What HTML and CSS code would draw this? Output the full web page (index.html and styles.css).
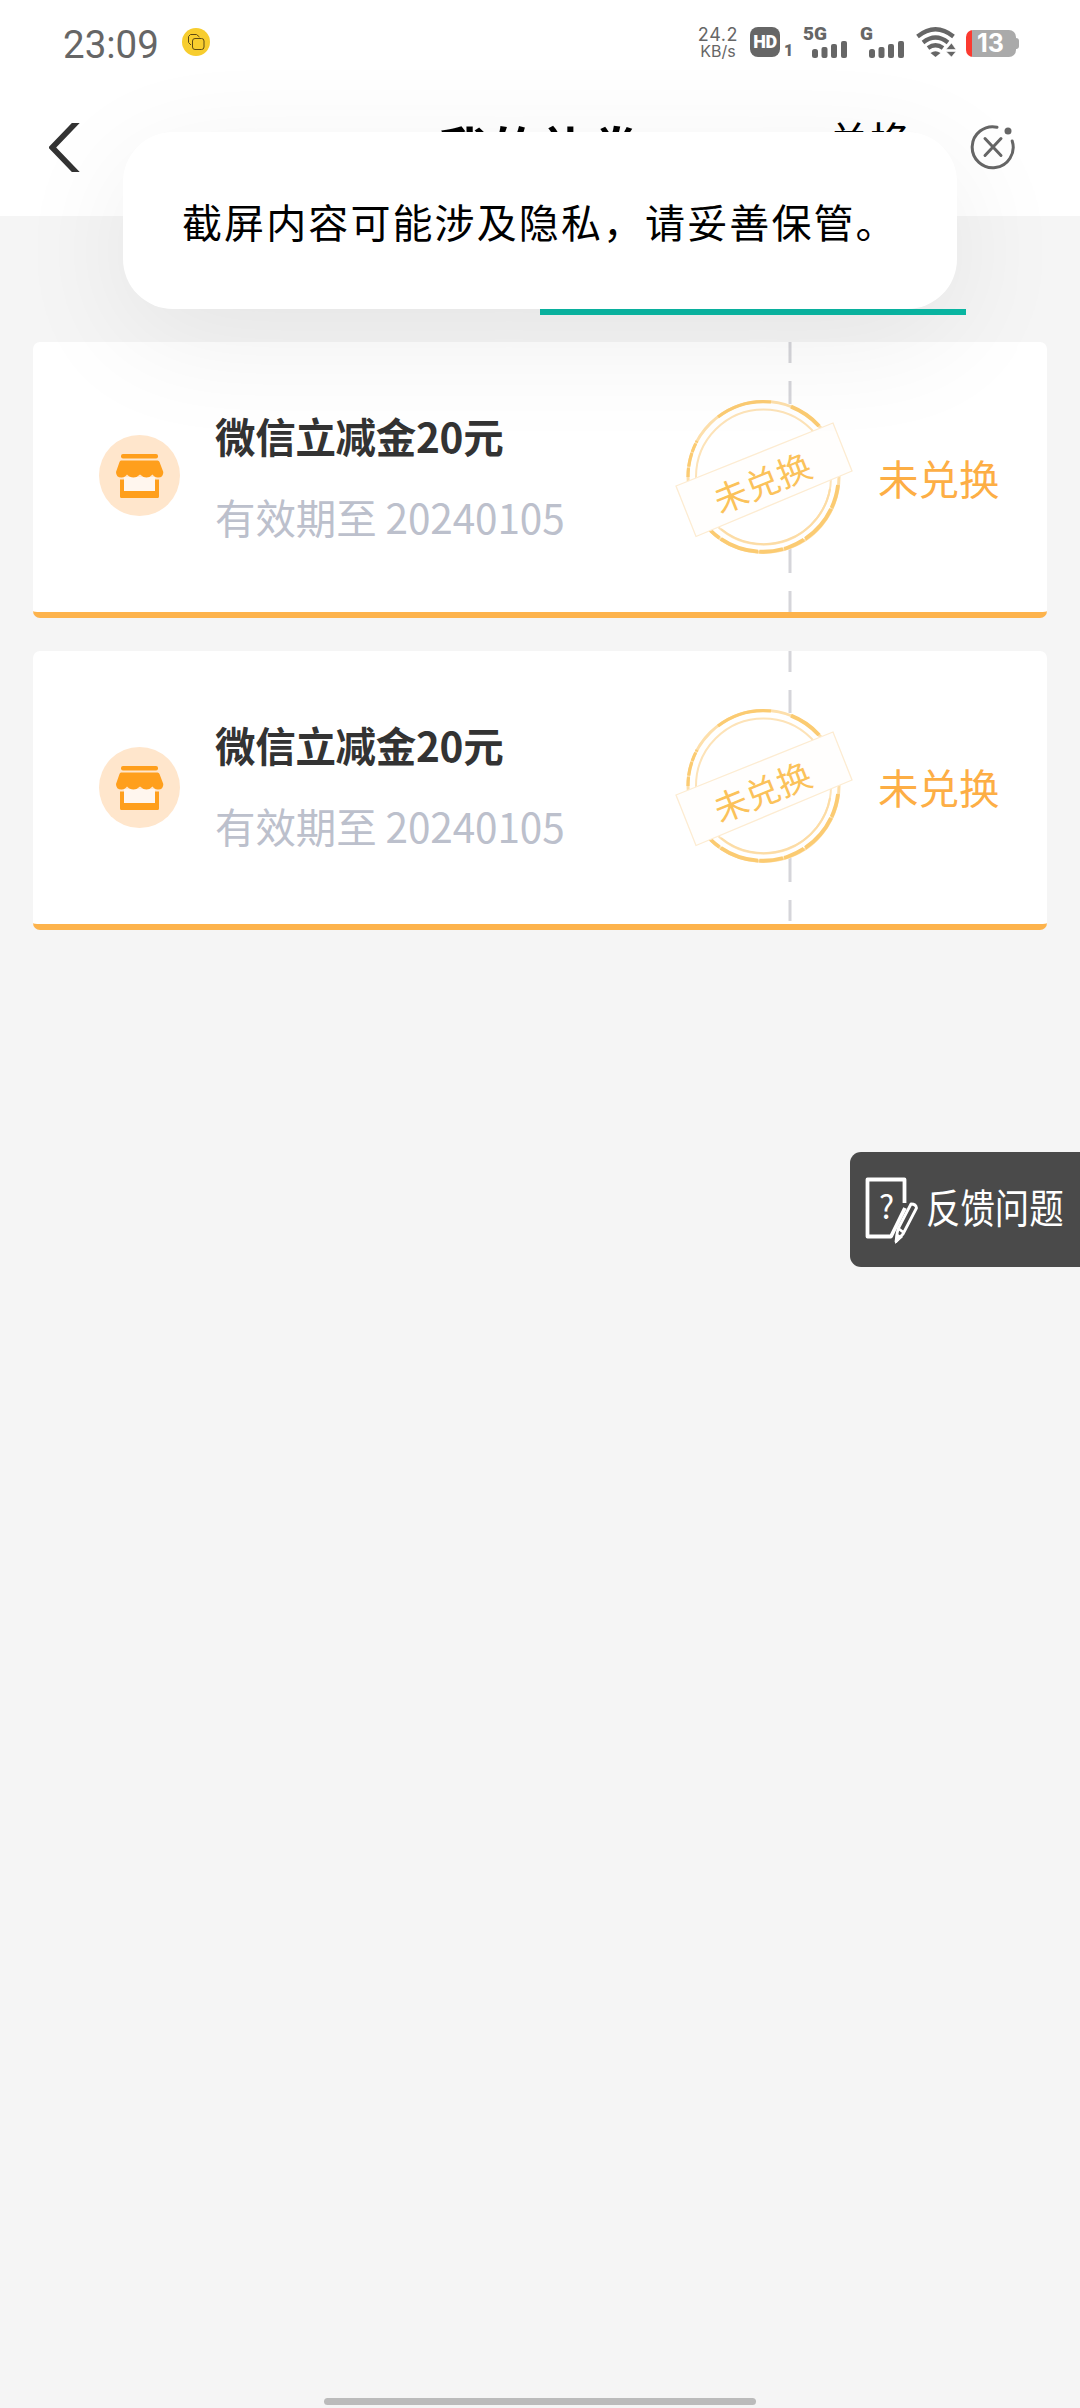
FILE: index.html
```html
<!DOCTYPE html>
<html lang="zh-CN">
<head>
<meta charset="utf-8">
<title>我的礼券</title>
<link rel="stylesheet" href="styles.css">
</head>
<body>
<svg width="0" height="0" class="defs" aria-hidden="true">
  <symbol id="shop" viewBox="0 0 81 81">
    <circle cx="40.5" cy="40.5" r="40.5" fill="#ffe6cc"/>
    <rect x="22" y="19" width="37" height="4.5" rx="2" fill="#ff9f1c"/>
    <path d="M25 42V56H56V42Z" fill="#fff6ee"/>
    <path d="M22 25.500H58.500Q60 25.500 60.500 27L64.300 37Q64.500 42.500 59 42.500Q55.500 42.500 53.500 39.500Q51 42.500 47.500 42.500Q44 42.500 41 39.500Q38 42.500 34.500 42.500Q30.500 42.500 28 39.500Q26 42.500 22.500 42.500Q17 42.500 17 37L20.500 27Q21 25.500 22 25.500Z" fill="#ff9f1c"/>
    <path d="M21 44.500H25V56H56V44.500H60V61.500Q60 63 58.500 63H22.500Q21 63 21 61.500Z" fill="#ff9f1c"/>
  </symbol>
  <symbol id="divider" viewBox="0 0 4 270">
    <path d="M2 0V21M2 39V62M2 206V231M2 249V270" stroke="#d5d5da" stroke-width="3"/>
  </symbol>
  <symbol id="stamp" viewBox="0 0 180 160">
    <circle cx="89.500" cy="80" r="77" fill="#fff"/>
    <circle cx="89.500" cy="80" r="75.500" fill="none" stroke="#fddfab" stroke-width="3"/>
    <g fill="none" stroke="#fbcb72" stroke-width="3.200">
      <path d="M44 20A75.500 75.500 0 0 1 97 5"/>
      <path d="M117 9.700A75.500 75.500 0 0 1 145 29" stroke-width="4"/>
      <path d="M14 80A75.500 75.500 0 0 1 23 44" stroke-dasharray="9 1.500 14 1"/>
      <path d="M164 88A75.500 75.500 0 0 1 36 133" stroke-width="3.800" stroke-dasharray="24 1 40 1.500 22 1"/>
    </g>
    <circle cx="89.500" cy="80" r="67.500" fill="none" stroke="#fde3b8" stroke-width="2"/>
    <path d="M156 92A67.500 67.500 0 0 1 47 132" fill="none" stroke="#fcdca5" stroke-width="2"/>
    <path d="M2 89L159 26L178 74L22 139.500Z" fill="#fffefd" stroke="#fdecd2" stroke-width="1.300"/>
  </symbol>
  <symbol id="bars" viewBox="0 0 36 17">
    <g fill="#666"><rect y="8" width="6" height="9" rx="2.500"/><rect x="9.500" y="6" width="6" height="11" rx="2"/><rect x="19" y="3" width="6" height="14" rx="2"/><rect x="29" width="6" height="17" rx="2"/></g>
  </symbol>
</svg>

<header class="header">
  <div class="status-bar">
    <span class="time">23:09</span>
    <svg class="notice" viewBox="0 0 28 28"><circle cx="14" cy="14" r="14" fill="#f7cd2e"/><g fill="none" stroke="#5d4a12" stroke-width="1"><path d="M9 17L6.500 14.500V8.500L8.500 6.500H14.500L17.500 9"/><rect x="10.500" y="10.500" width="11.500" height="11" rx="2.500"/></g></svg>
    <div class="speed"><span>24.2</span><span class="unit">KB/s</span></div>
    <span class="hd">HD</span><span class="sim">1</span>
    <div class="signal five"><span>5G</span><svg><use href="#bars"/></svg></div>
    <div class="signal two"><span>G</span><svg><use href="#bars"/></svg></div>
    <svg class="wifi" viewBox="0 0 40 30"><g fill="none" stroke="#666" stroke-width="4.200"><path d="M1.500 9.500Q19.500 -5 37.500 9.500"/><path d="M7 15.500Q19.500 5.500 32 15.500"/><path d="M12 21Q19.500 15.500 27 21"/></g><path d="M14.500 26Q19.500 22.500 24.500 26L19.500 30Z" fill="#666"/><path d="M30 22.500L35.500 16L40 22.500Z M30 24.500L35.500 30L40 24.500Z" fill="#666" stroke="#fff" stroke-width=".6"/></svg>
    <div class="battery"><span>13</span></div>
  </div>
  <nav class="nav">
    <svg class="back" viewBox="0 0 32 50"><path d="M31 0H23L-1 25L23 50H31L7 25Z" fill="#333"/></svg>
    <h1>我的礼券</h1>
    <span class="redeem">兑换</span>
    <svg class="close" viewBox="0 0 46 46"><g fill="none" stroke="#666" stroke-width="3" stroke-linecap="round"><path d="M27 3.200A20.500 20.500 0 1 0 42.200 17"/><path d="M15 14.500L31 31.500M31 14.500L15 31.500"/></g><circle cx="38" cy="7" r="3.500" fill="#666"/></svg>
  </nav>
</header>

<div class="tabs"><div class="tab"></div><div class="tab active"></div></div>

<main class="coupons">
  <article class="coupon">
    <svg class="shop"><use href="#shop"/></svg>
    <div class="info"><h2>微信立减金20元</h2><p>有效期至 20240105</p></div>
    <div class="split"><svg class="divider"><use href="#divider"/></svg><svg class="stamp"><use href="#stamp"/></svg><span class="stamp-text">未兑换</span></div>
    <span class="state">未兑换</span>
  </article>
  <article class="coupon taller">
    <svg class="shop"><use href="#shop"/></svg>
    <div class="info"><h2>微信立减金20元</h2><p>有效期至 20240105</p></div>
    <div class="split"><svg class="divider"><use href="#divider"/></svg><svg class="stamp"><use href="#stamp"/></svg><span class="stamp-text">未兑换</span></div>
    <span class="state">未兑换</span>
  </article>
</main>

<div class="toast">截屏内容可能涉及隐私，请妥善保管。</div>

<aside class="feedback">
  <svg viewBox="0 0 54 70"><g fill="none" stroke="#fff" stroke-linejoin="round"><path d="M39.500 27V3.500H2.500V60.500H26L40 32" stroke-width="3.800"/><path d="M32 58L33 53L46 28Q51 28 51.500 32L38 58L31 65.500Z M34 53L38 56" stroke-width="2.800"/></g><path d="M31 57L38 61L30 68Z" fill="#fff"/><text x="21.500" y="43" text-anchor="middle" class="mark">?</text></svg>
  <span>反馈问题</span>
</aside>

<div class="home-bar"></div>
</body>
</html>
```
FILE: styles.css
```css
* { box-sizing: border-box; }
body {
  margin: 0;
  width: 1080px;
  height: 2408px;
  position: relative;
  overflow: hidden;
  background: #f5f5f5;
  font-family: "Noto Sans CJK SC", sans-serif;
  color: #333;
}
h1, h2, p { margin: 0; }
svg { display: block; flex: none; }
.defs { position: absolute; }

.header { height: 216px; background: #fff; }

.status-bar {
  height: 84px;
  padding: 27px 60px 0 63px;
  display: flex;
  align-items: flex-start;
  font-family: Roboto, sans-serif;
  color: #666;
}
.time { width: 119px; font-size: 38.500px; line-height: 36px; }
.notice { width: 28px; height: 28px; margin-top: 1px; }
.speed {
  width: 50px;
  margin-left: 483px;
  display: flex;
  flex-direction: column;
  align-items: center;
  font-family: Inter, sans-serif;
  font-size: 18px;
  line-height: 15px;
  letter-spacing: 0.6px;
}
.speed .unit { font-size: 16px; line-height: 18px; letter-spacing: 0; }
.hd {
  width: 30px;
  height: 30px;
  margin-left: 7px;
  border-radius: 8px;
  background: #666;
  color: #fff;
  font: 900 18px/30px Roboto, sans-serif;
  letter-spacing: -0.5px;
  text-align: center;
}
.sim { width: 6px; margin: 16px 0 0 4px; font: 900 16px/16px Roboto, sans-serif; }
.signal { width: 45px; height: 30px; font: 900 19px/14px Roboto, sans-serif; }
.signal span { display: block; height: 14px; }
.signal svg { width: 36px; height: 17px; margin: 0 0 0 9px; }
.five { margin-left: 13px; }
.two { margin-left: 12px; }
.wifi { width: 40px; height: 30px; margin-left: 11px; }
.battery {
  width: 50px;
  height: 27px;
  margin: 3px 0 0 10px;
  border-radius: 7px;
  background: linear-gradient(to right, #fb3a30 6px, #aaa 6px);
  position: relative;
  color: #fff;
  font: 700 25px/27px Inter, sans-serif;
  padding-left: 11px;
}
.battery::after {
  content: "";
  position: absolute;
  left: 50px;
  top: 8px;
  width: 3px;
  height: 11px;
  border-radius: 0 3px 3px 0;
  background: #aaa;
}

.nav {
  height: 126px;
  display: grid;
  grid-template-columns: 49px 32px 1fr 80px 59px 46px 64px;
  align-items: center;
}
.back { grid-column: 2; width: 32px; height: 49px; }
.nav h1 {
  margin-left: 358px;
  font-size: 50.500px;
  line-height: 60px;
  color: #000;
  white-space: nowrap;
}
.redeem { margin: -14px 0 0 -3px; font-size: 42px; line-height: 60px; color: #000; white-space: nowrap; }
.close { grid-column: 6; width: 46px; height: 46px; }

.tabs { height: 99px; display: flex; }
.tab { flex: 1; }
.active { border-bottom: 6px solid #0ab9a5; margin-right: 114px; flex: none; width: 426px; }

.coupons {
  padding: 27px 33px 0;
  display: flex;
  flex-direction: column;
  gap: 33px;
}
.coupon {
  height: 276px;
  display: grid;
  grid-template-columns: 182px 1fr 202px 168px;
  border-radius: 7px;
  border-bottom: 6px solid #fdb34c;
  background: #fff;
}
.taller { height: 279px; }
.shop { width: 81px; height: 81px; margin: 93px 0 0 66px; }
.taller .shop { margin-top: 96px; }
.info { padding-top: 64px; white-space: nowrap; }
.info h2 { font-size: 40.500px; line-height: 60px; letter-spacing: -0.300px; }
.info p { margin-top: 21px; font-size: 40.500px; line-height: 60px; letter-spacing: -0.100px; color: #bcc0cc; }
.split { display: grid; }
.divider, .stamp, .stamp-text { grid-area: 1 / 1; }
.divider { width: 4px; height: 270px; margin-left: 111px; }
.stamp { width: 180px; height: 160px; margin: 55px 0 0 -3px; }
.stamp-text {
  width: 102px;
  height: 50px;
  margin: 115px 0 0 34px;
  font-size: 34px;
  line-height: 50px;
  color: #fbc25a;
  transform: rotate(-22deg);
  white-space: nowrap;
}
.state { padding-top: 106px; margin-left: -1px; font-size: 40.500px; line-height: 60px; color: #fdae45; }

.toast {
  position: absolute;
  left: 123px;
  top: 132px;
  width: 834px;
  height: 177px;
  padding-left: 59px;
  border-radius: 50px;
  background: #fff;
  box-shadow: 0 30px 120px rgba(0, 0, 0, 0.07);
  color: #000;
  font-size: 40px;
  letter-spacing: 2.100px;
  line-height: 179px;
  white-space: nowrap;
}

.feedback {
  position: absolute;
  right: 0;
  top: 1152px;
  width: 230px;
  height: 115px;
  padding-left: 15px;
  display: flex;
  align-items: center;
  border-radius: 11px 0 0 11px;
  background: #4a4a4a;
  color: #fff;
}
.feedback svg { width: 54px; height: 70px; margin-top: 3px; }
.feedback span {
  margin: -7px 0 0 7px;
  font-size: 40px;
  transform: scaleX(0.86);
  transform-origin: left;
  white-space: nowrap;
}
.mark { font: 32px "Noto Sans CJK SC", sans-serif; fill: #fff; }

.home-bar {
  position: absolute;
  left: 324px;
  top: 2398px;
  width: 432px;
  height: 7px;
  border-radius: 4px;
  background: #bbb;
}
```
